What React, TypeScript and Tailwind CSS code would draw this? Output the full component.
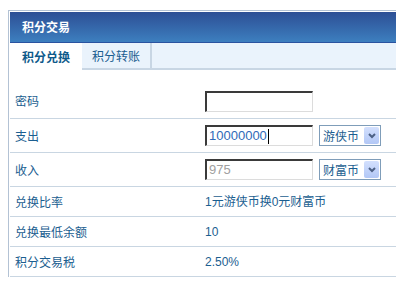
const cjk = { fontFamily: '"Noto Sans CJK SC", "Liberation Sans", sans-serif' };
const num = { fontFamily: '"Liberation Sans", "Noto Sans CJK SC", sans-serif' };

const FakeInput = ({ value, muted, caret }: { value?: string; muted?: boolean; caret?: boolean }) => (
  <div
    className="flex h-[21px] w-[108px] items-center border-t-2 border-l-2 border-r border-b border-t-[#3a3a3a] border-l-[#3a3a3a] border-r-[#dcdcdc] border-b-[#dcdcdc] bg-white pl-[2px] text-[13px]"
    style={num}
  >
    <span className={muted ? 'text-[#a0a0a0]' : 'text-[#2f6ab8]'}>{value}</span>
    {caret && <span className="ml-px inline-block h-[15px] w-px bg-black" />}
  </div>
);

const FakeSelect = ({ label }: { label: string }) => (
  <div className="ml-[6px] flex h-[21px] w-[62px] items-center justify-between border border-[#7f9db9] bg-white pl-[3px] pr-px">
    <span className="text-[12px] leading-none text-[#1b5e90]" style={cjk}>
      {label}
    </span>
    <span className="flex h-[17px] w-[15px] items-center justify-center rounded-[2px] bg-gradient-to-b from-[#d3e0fd] to-[#b2c7f6]">
      <svg width="8" height="6" viewBox="0 0 8 6">
        <path d="M1 1l3 3 3-3" stroke="#4d6185" strokeWidth="2" fill="none" />
      </svg>
    </span>
  </div>
);

const Row = ({ label, h, children }: { label: string; h: string; children?: React.ReactNode }) => (
  <div className={`flex items-center border-b border-[#c9d6e2] ${h}`}>
    <div className="w-[195px] pl-[5px] text-[12px] text-[#1b5e90]" style={cjk}>
      {label}
    </div>
    <div className="flex items-center">{children}</div>
  </div>
);

export default function App() {
  return (
    <div className="h-[282px] w-[396px] overflow-hidden bg-white pt-[10px] pl-2">
      <div className="border-t border-l border-[#b3c2d4] pt-px pl-px">
        <div className="flex h-[31px] items-center border-b border-[#2a53a0] bg-gradient-to-b from-[#2d4f95] to-[#3d7fbf] pl-3">
          <span className="text-[12px] font-bold text-white" style={cjk}>
            积分交易
          </span>
        </div>
        <div className="flex h-[27px] bg-[#eaf3fc]">
          <div className="flex w-[72px] items-center justify-center bg-white text-[12px] font-bold text-[#0d5a8a]" style={cjk}>
            积分兑换
          </div>
          <div className="flex w-[70px] items-center justify-center border-r-2 border-b-2 border-[#c8d6e4] text-[12px] text-[#1b5e90]" style={cjk}>
            积分转账
          </div>
          <div className="flex-1 border-b-2 border-[#c8d6e4]" />
        </div>
        <div className="pt-[14px]">
          <Row label="密码" h="h-[35px]">
            <FakeInput />
          </Row>
          <Row label="支出" h="h-[34px]">
            <FakeInput value="10000000" caret />
            <FakeSelect label="游侠币" />
          </Row>
          <Row label="收入" h="h-[34px]">
            <FakeInput value="975" muted />
            <FakeSelect label="财富币" />
          </Row>
          <Row label="兑换比率" h="h-[30px]">
            <span className="text-[12px] text-[#1b5e90]" style={num}>
              1元游侠币换0元财富币
            </span>
          </Row>
          <Row label="兑换最低余额" h="h-[30px]">
            <span className="text-[12px] text-[#1b5e90]" style={num}>
              10
            </span>
          </Row>
          <Row label="积分交易税" h="h-[30px]">
            <span className="text-[12px] text-[#1b5e90]" style={num}>
              2.50%
            </span>
          </Row>
        </div>
      </div>
    </div>
  );
}
